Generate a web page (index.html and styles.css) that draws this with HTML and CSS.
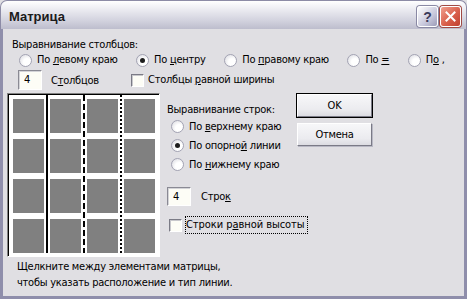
FILE: index.html
```html
<!DOCTYPE html>
<html lang="ru">
<head>
    <meta charset="UTF-8">
    <title>Матрица</title>
    <link rel="stylesheet" href="styles.css">
</head>
<body>
    <div class="window">
        <div class="titlebar">
            <span class="title">Матрица</span>
            <div class="title-buttons">
                <span class="tb-btn help">?</span>
                <span class="tb-btn close">
                    <svg width="11" height="11" viewBox="0 0 11 11">
                        <path d="M1.5 1.5 L9.5 9.5 M9.5 1.5 L1.5 9.5" stroke="#fff" stroke-width="2" stroke-linecap="square"/>
                    </svg>
                </span>
            </div>
        </div>

        <div class="client">
            <div class="group-label">Выравнивание столбцов:</div>
            <div class="col-align">
                <label class="opt"><span class="radio"></span><span>По <u>л</u>евому краю</span></label>
                <label class="opt"><span class="radio checked"></span><span>По <u>ц</u>ентру</span></label>
                <label class="opt"><span class="radio"></span><span>По <u>п</u>равому краю</span></label>
                <label class="opt"><span class="radio"></span><span>По <u>=</u></span></label>
                <label class="opt"><span class="radio"></span><span>П<u>о</u> ,</span></label>
            </div>

            <div class="count-row">
                <span class="edit">4</span>
                <span class="count-label">С<u>т</u>олбцов</span>
                <label class="opt check-opt"><span class="check"></span><span>Столбцы <u>р</u>авной ширины</span></label>
            </div>

            <div class="main">
                <div class="matrix">
                    <div class="cells" id="cells"></div>
                    <span class="sep solid"></span>
                    <span class="sep dashed"></span>
                    <span class="sep dotted"></span>
                </div>

                <div class="side">
                    <div class="side-label">Выравнивание строк:</div>
                    <label class="opt row-opt"><span class="radio"></span><span>По <u>в</u>ерхнему краю</span></label>
                    <label class="opt row-opt"><span class="radio checked"></span><span>По опорно<u>й</u> линии</span></label>
                    <label class="opt row-opt"><span class="radio"></span><span>По <u>н</u>ижнему краю</span></label>

                    <div class="rows-count">
                        <span class="edit">4</span>
                        <span class="count-label">Стро<u>к</u></span>
                    </div>

                    <label class="opt check-opt rows-check"><span class="check"></span><span class="focus">Строки р<u>а</u>вной высоты</span></label>
                </div>

                <div class="buttons">
                    <button class="btn default">OK</button>
                    <button class="btn">Отмена</button>
                </div>
            </div>

            <p class="hint">Щелкните между элементами матрицы,<br>чтобы указать расположение и тип линии.</p>
        </div>
    </div>

    <script>
        const cells = document.getElementById("cells");
        for (let i = 0; i < 16; i++) {
            const cell = document.createElement("span");
            cell.classList.add("cell");
            cells.appendChild(cell);
        }
    </script>
</body>
</html>
```

FILE: styles.css
```css
body {
    margin: 0;
    padding: 0;
    font-family: "DejaVu Sans Condensed", "DejaVu Sans", sans-serif;
    font-stretch: condensed;
    font-size: 11px;
    letter-spacing: -0.25px;
    color: #000000;
    background: #e0dfe3;
}

.window {
    width: 467px;
    height: 299px;
    display: flex;
    flex-direction: column;
}

/* title bar, silver theme */
.titlebar {
    height: 29px;
    flex: none;
    display: flex;
    align-items: center;
    justify-content: space-between;
    padding: 0 5px 0 8px;
    border-radius: 7px 7px 0 0;
    border: 1px solid #8c8ba6;
    border-bottom: none;
    box-sizing: border-box;
    background: linear-gradient(to bottom, #ffffff 0%, #f3f3f7 18%, #e2e2ea 45%, #d2d2de 70%, #bdbdcd 100%);
}

.title {
    font-family: "Liberation Sans", sans-serif;
    font-weight: bold;
    font-size: 13px;
    letter-spacing: 0;
    color: #1a1a1a;
    margin-top: 3px;
}

.title-buttons {
    display: flex;
    gap: 2px;
    margin-top: 3px;
}

.tb-btn {
    width: 21px;
    height: 21px;
    box-sizing: border-box;
    border-radius: 3px;
    border: 1px solid #ffffff;
    display: flex;
    align-items: center;
    justify-content: center;
}

.help {
    background: linear-gradient(to bottom right, #ffffff, #c8c8dc 60%, #9c9cb8);
    box-shadow: 0 0 0 1px #8a89a4;
    font-family: "Liberation Sans", sans-serif;
    font-weight: bold;
    font-size: 14px;
    letter-spacing: 0;
    color: #3b3b5a;
}

.close {
    background: linear-gradient(to bottom right, #f0a090, #d9604c 55%, #c04030);
    box-shadow: 0 0 0 1px #a04a44;
}

/* client area */
.client {
    flex: 1;
    border: 3px solid #8f8eab;
    border-top: none;
    padding: 9px 0 0 4px;
    box-sizing: border-box;
}

.group-label {
    margin-left: 5px;
    line-height: 14px;
}

.col-align {
    display: flex;
    gap: 18.5px;
    margin: 1px 0 0 12px;
    height: 14px;
}

.opt {
    display: flex;
    align-items: center;
    white-space: nowrap;
    line-height: 14px;
}

.radio {
    width: 13px;
    height: 13px;
    box-sizing: border-box;
    border-radius: 50%;
    border: 1px solid #a3a3b3;
    background: radial-gradient(circle at 65% 65%, #ffffff 35%, #dcdce2 90%);
    margin-right: 5px;
    position: relative;
    flex: none;
}

.radio.checked::after {
    content: "";
    position: absolute;
    left: 3px;
    top: 3px;
    width: 5px;
    height: 5px;
    border-radius: 50%;
    background: #1e1e1e;
}

.check {
    width: 13px;
    height: 13px;
    box-sizing: border-box;
    border: 1px solid;
    border-color: #7b7b86 #ffffff #ffffff #7b7b86;
    box-shadow: inset 1px 1px #c8c8cc;
    background: #fdfdf6;
    margin-right: 4px;
    flex: none;
}

.edit {
    width: 24px;
    height: 20px;
    box-sizing: border-box;
    border: 1px solid;
    border-color: #8a8a94 #ffffff #ffffff #8a8a94;
    box-shadow: inset 1px 1px #d4d4d8;
    background: #fdfdf6;
    padding-left: 5px;
    line-height: 18px;
    flex: none;
}

.count-row {
    display: flex;
    align-items: center;
    height: 20px;
    margin: 3px 0 0 11px;
}

.count-row .count-label {
    margin-left: 9px;
    width: 80px;
}

/* matrix preview and right panels */
.main {
    display: flex;
    margin-top: 3px;
    height: 164px;
}

.matrix {
    width: 153px;
    height: 164px;
    box-sizing: border-box;
    border: 1px solid;
    border-color: #808080 #ffffff #ffffff #808080;
    box-shadow: inset 1px 1px #000000;
    background: #ffffff;
    padding: 5px 2px 2px 5px;
    position: relative;
    flex: none;
}

.cells {
    display: grid;
    grid-template-columns: repeat(4, 31px);
    grid-template-rows: repeat(4, 34px);
    gap: 6px;
}

.cell {
    background: #808080;
}

.sep {
    position: absolute;
    top: 1px;
    bottom: 3px;
    width: 2px;
}

.solid {
    left: 38px;
    background: #000000;
}

.dashed {
    left: 75px;
    background: repeating-linear-gradient(to bottom, #000000 0 6px, transparent 6px 9px);
}

.dotted {
    left: 112px;
    background: repeating-linear-gradient(to bottom, #000000 0 2px, transparent 2px 4px);
}

.side {
    width: 130px;
    margin-left: 7px;
    flex: none;
}

.side-label {
    margin-top: 10px;
    line-height: 14px;
}

.row-opt {
    height: 19px;
    padding-left: 4px;
}

.rows-count {
    display: flex;
    align-items: center;
    margin-top: 13px;
    height: 19px;
}

.rows-count .edit {
    height: 19px;
    line-height: 17px;
}

.rows-count .count-label {
    margin-left: 10px;
}

.rows-check {
    margin: 11px 0 0 2px;
    height: 16px;
}

.focus {
    outline: 1px dotted #000000;
    outline-offset: 0;
    padding: 1px 2px 1px 0;
    letter-spacing: -0.05px;
}

.buttons {
    display: flex;
    flex-direction: column;
    gap: 6px;
    margin-top: 1px;
}

.btn {
    width: 75px;
    height: 23px;
    font: inherit;
    letter-spacing: inherit;
    color: #000000;
    border: 1px solid;
    border-color: #ffffff #7a7a86 #7a7a86 #ffffff;
    box-shadow: 1px 1px 0 #b8b8c4;
    background: linear-gradient(to bottom, #f7f7f9, #ebebef 70%, #dcdce2);
    padding: 0;
}

.btn.default {
    outline: 1px solid #000000;
    outline-offset: 0;
}

.hint {
    margin: 2px 0 0 10px;
    line-height: 16px;
}
```
